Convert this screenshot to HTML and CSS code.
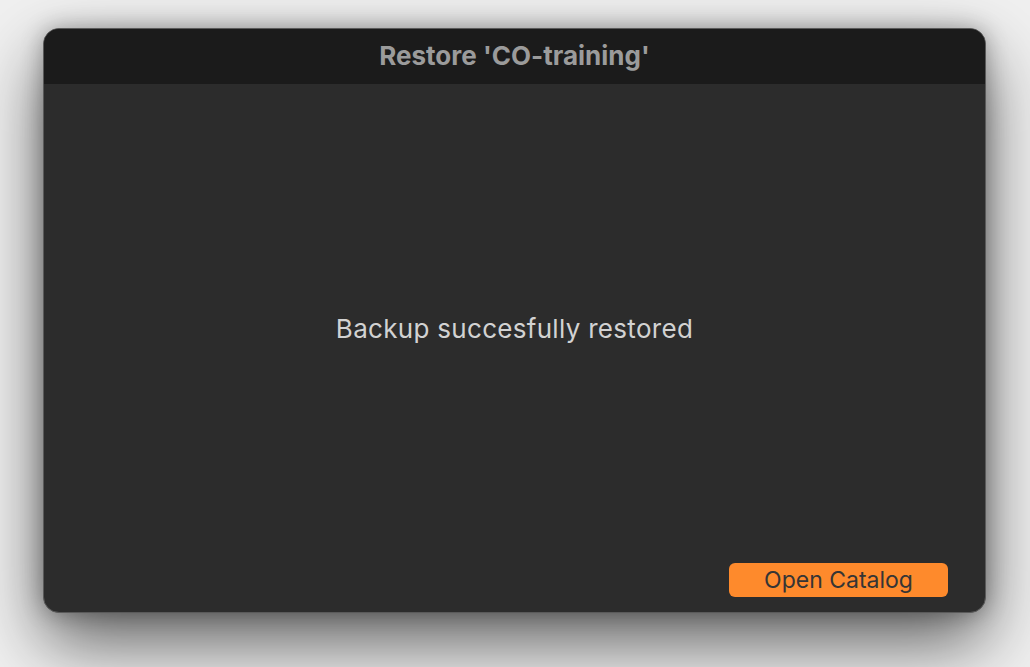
FILE: index.html
```html
<!DOCTYPE html>
<html lang="en">
<head>
    <meta charset="UTF-8">
    <meta name="viewport" content="width=device-width, initial-scale=1.0">
    <title>Restore 'CO-training'</title>
    <link rel="stylesheet" href="styles.css">
</head>
<body>

    <div class="window">
        <div class="titlebar">Restore 'CO-training'</div>

        <div class="content">
            <p class="message">Backup succesfully restored</p>
        </div>

        <div class="footer">
            <button class="primary">Open Catalog</button>
        </div>
    </div>

</body>
</html>
```

FILE: styles.css
```css
body {
    margin: 0;
    padding: 28px 44px 0 43px;
    height: 667px;
    box-sizing: border-box;
    background-color: #f0f0f0;
    font-family: Inter, "Noto Sans", sans-serif;
    overflow: hidden;
}
.window {
    height: 585px;
    display: flex;
    flex-direction: column;
    background-color: #2c2c2c;
    border: 1px solid #5a5a5a;
    border-radius: 16px;
    box-sizing: border-box;
    overflow: hidden;
    box-shadow: 0 30px 70px rgba(0, 0, 0, 0.6), 0 0 22px rgba(0, 0, 0, 0.3);
}
.titlebar {
    height: 55px;
    flex-shrink: 0;
    display: flex;
    align-items: center;
    justify-content: center;
    background-color: #1b1b1b;
    color: #9b9b9b;
    font-size: 26px;
    font-weight: 700;
    padding-bottom: 3px;
    box-sizing: border-box;
}
.content {
    flex: 1;
    display: flex;
    align-items: center;
    justify-content: center;
}
.message {
    margin: 10px 0 0 0;
    color: #d2d2d2;
    font-size: 26px;
    letter-spacing: 0.3px;
}
.footer {
    display: flex;
    justify-content: flex-end;
    padding: 0 37px 15px 0;
}
button.primary {
    width: 219px;
    height: 34px;
    border: none;
    border-radius: 6px;
    background-color: #fe8a2c;
    color: #353535;
    font-family: Inter, "Noto Sans", sans-serif;
    font-size: 23px;
    padding: 0;
    cursor: pointer;
}
```
